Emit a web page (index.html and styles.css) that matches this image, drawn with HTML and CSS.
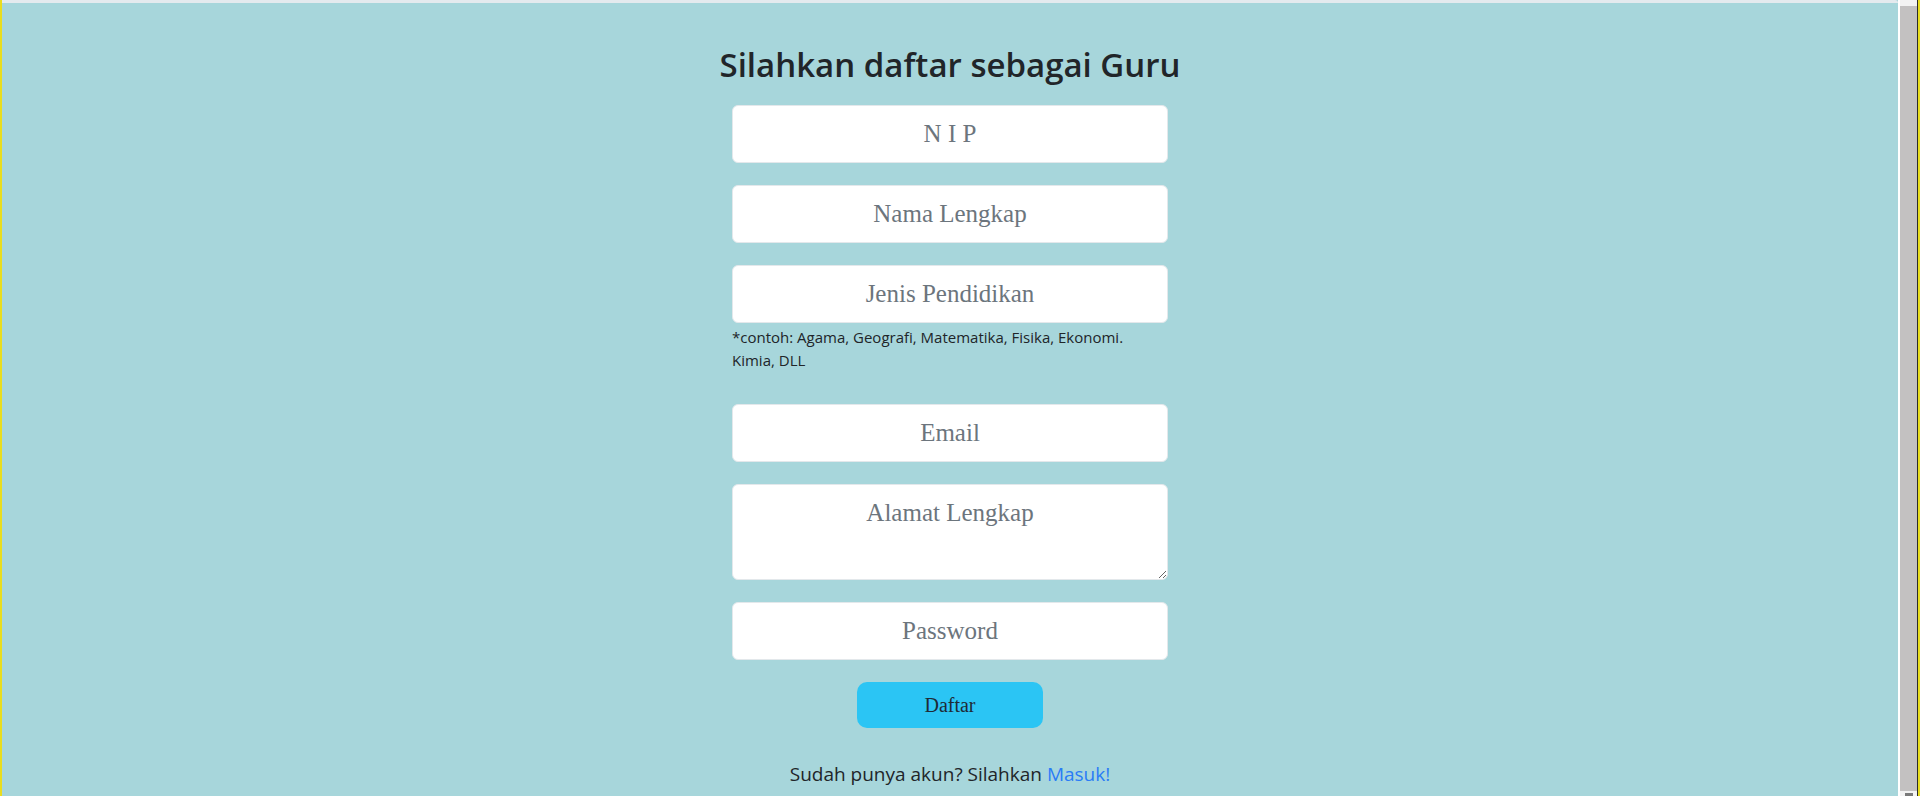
FILE: index.html
```html
<!DOCTYPE html>
<html lang="id">
<head>
<meta charset="utf-8">
<title>Daftar Guru</title>
<link rel="stylesheet" href="styles.css">
</head>
<body>
<div class="window">
  <div class="edge edge-left"></div>
  <main class="page">
    <h2 class="title">Silahkan daftar sebagai Guru</h2>
    <form class="form">
      <input class="field" type="text" placeholder="N I P">
      <input class="field" type="text" placeholder="Nama Lengkap">
      <div class="group">
        <input class="field" type="text" placeholder="Jenis Pendidikan">
        <small class="hint">*contoh: Agama, Geografi, Matematika, Fisika, Ekonomi. Kimia, DLL</small>
      </div>
      <input class="field" type="email" placeholder="Email">
      <textarea class="field field-area" placeholder="Alamat Lengkap"></textarea>
      <input class="field" type="password" placeholder="Password">
      <button class="btn" type="button">Daftar</button>
    </form>
    <p class="footer">Sudah punya akun? Silahkan <a class="link" href="#">Masuk!</a></p>
  </main>
  <div class="scrollbar">
    <div class="thumb"></div>
    <div class="arrow"></div>
  </div>
  <div class="edge edge-right"></div>
</div>
</body>
</html>
```
FILE: styles.css
```css
* { box-sizing: border-box; }
html, body { margin: 0; padding: 0; height: 100%; overflow: hidden; }
body { background: #a7d6db; font-family: "Open Sans", "Noto Sans", sans-serif; color: #212529; }

.window { display: flex; height: 100vh; }

.edge { flex: 0 0 auto; }
.edge-left { width: 2px; background: #e9dd1e; }
.edge-right { width: 3px; background: #e9dd1e; border-left: 1px solid #2b2b2b; }

.page {
  flex: 1 1 auto;
  background: #a7d6db;
  border-top: 3px solid #e4eaee;
  border-top-right-radius: 3px;
  padding-top: 43px;
  text-align: center;
}

.title {
  margin: 0;
  font-size: 33px;
  line-height: 38px;
  font-weight: 600;
  color: #212529;
}

.form {
  width: 436px;
  margin: 21px auto 0;
  display: flex;
  flex-direction: column;
  gap: 22px;
}

.field {
  display: block;
  width: 100%;
  height: 58px;
  padding: 0 12px;
  background: #fff;
  border: 1px solid #e3e8eb;
  border-radius: 6px;
  font-family: "Liberation Serif", "Times New Roman", serif;
  font-size: 25px;
  color: #212529;
  text-align: center;
  outline: none;
}
.field::placeholder { color: #6c757d; opacity: 1; }

.field-area {
  height: 96px;
  padding-top: 9px;
  line-height: 1.5;
  resize: both;
}

.group { display: flex; flex-direction: column; padding-bottom: 10px; }

.hint {
  display: block;
  margin-top: 3px;
  font-size: 15px;
  line-height: 23px;
  text-align: left;
  color: #212529;
}

.btn {
  align-self: center;
  width: 186px;
  height: 46px;
  border: none;
  border-radius: 10px;
  background: #2bc5f4;
  font-family: "Liberation Serif", "Times New Roman", serif;
  font-size: 20px;
  color: #1f2a36;
}

.footer {
  margin: 33px 0 0;
  font-size: 19px;
  line-height: 27px;
}
.link { color: #2a7cf6; text-decoration: none; }

.scrollbar {
  flex: 0 0 19px;
  display: flex;
  flex-direction: column;
  background: #f3f3f3;
  border-left: 2px solid #ffffff;
}
.thumb { flex: 1 1 auto; margin-top: 6px; background: #c3c1c1; }
.arrow {
  flex: 0 0 5px;
  display: flex;
  justify-content: center;
  align-items: flex-end;
}
.arrow::after {
  content: "";
  width: 8px;
  height: 3px;
  background: #7a7a7a;
}
```
